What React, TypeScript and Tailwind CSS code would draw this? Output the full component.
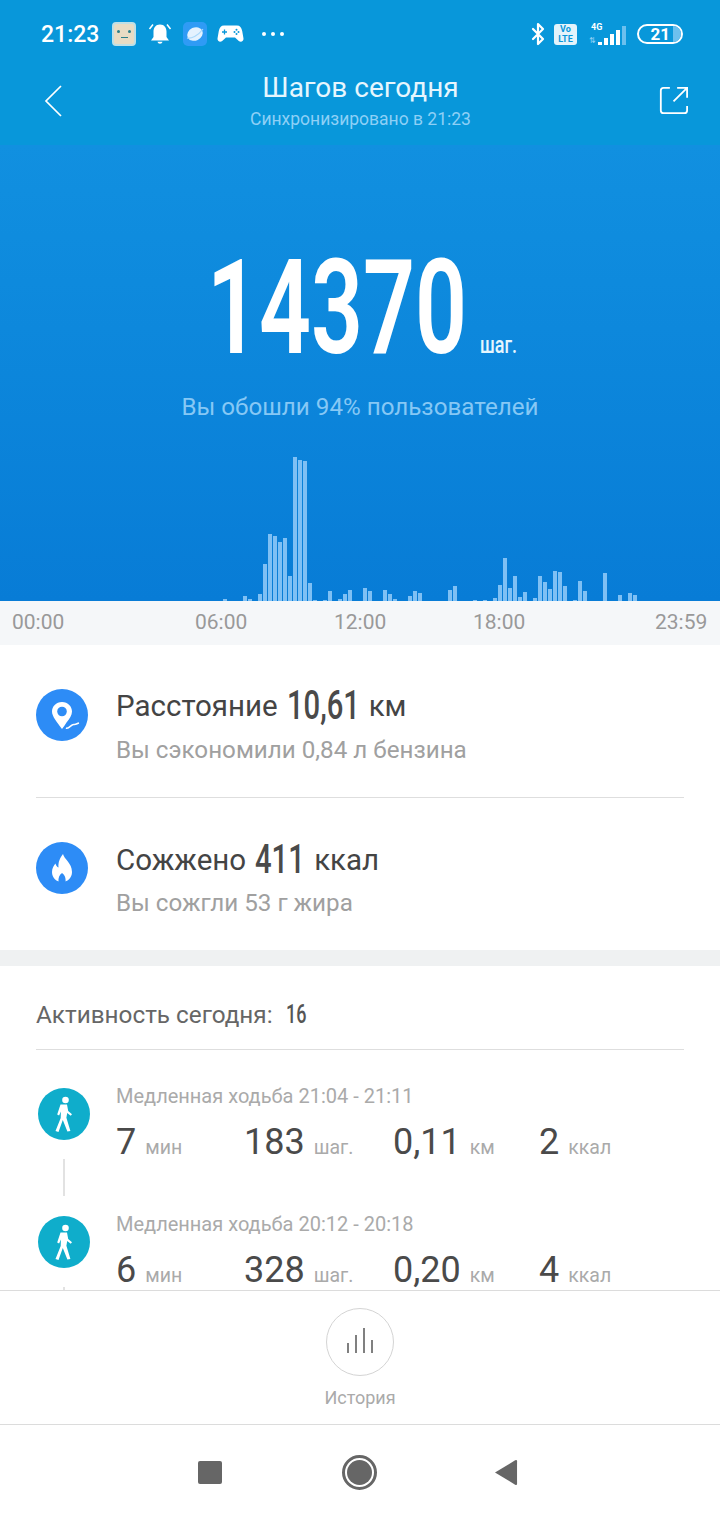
import React from "react";
import { Bluetooth } from "lucide-react";

// [x position in px, bar height in px] of the daily step chart
const bars: [number, number][] = [
    [223, 2], [243, 5], [248, 2], [258, 7], [263, 37], [268, 67], [273, 65], [278, 59],
    [283, 63], [288, 25], [293, 144], [298, 141], [303, 140], [308, 18], [313, 1], [323, 1],
    [328, 10], [338, 2], [343, 7], [348, 11], [363, 13], [368, 10], [383, 11], [388, 7],
    [393, 2], [408, 5], [413, 10], [418, 8], [448, 11], [453, 15], [473, 1], [483, 1],
    [493, 3], [498, 16], [503, 43], [508, 13], [513, 25], [518, 4], [523, 9], [533, 3],
    [538, 25], [543, 19], [548, 12], [553, 30], [558, 29], [563, 15], [573, 1], [578, 20],
    [583, 10], [603, 28], [618, 6], [628, 8], [633, 6],
];

const slots = Array.from({ length: 143 }, (_, i) => {
    const found = bars.find((b) => b[0] === 3 + i * 5);
    return found ? found[1] : 0;
});

const activities = [
    { title: "Медленная ходьба 21:04 - 21:11", min: "7", steps: "183", km: "0,11", kcal: "2" },
    { title: "Медленная ходьба 20:12 - 20:18", min: "6", steps: "328", km: "0,20", kcal: "4" },
];

function Walker() {
    return (
        <svg width="52" height="52" viewBox="0 0 52 52" fill="none">
            <circle cx="26" cy="26" r="26" fill="#0fadcb" />
            <circle cx="27.500" cy="12" r="3.300" fill="#fff" />
            <path
                d="M22.500 16.500h6.500l1.200 6.500 3.800 3.300-1.300 1.500-3.500-2.800-.8 4.700 4 13.300-3 .6-4.600-11.500-4.300 11.800-3-1 5.200-13 .2-6.500-1.800 4-1.900-.9z"
                fill="#fff"
            />
        </svg>
    );
}

function StatusBar() {
    return (
        <div className="h-[66px] flex items-center justify-between pl-[41px] pr-[37px] pt-[2px] text-white">
            <div className="flex items-center">
                <span className="text-[23px] font-medium leading-none w-[59px]">21:23</span>
                <div className="ml-[12px] w-[24px] h-[24px] rounded-[4px] bg-[#e8dcc4] border-2 border-[#bfe0e6] flex flex-col items-center justify-center">
                    <div className="flex gap-[8px]">
                        <div className="w-[3px] h-[3px] rounded-full bg-[#2a7f8a]" />
                        <div className="w-[3px] h-[3px] rounded-full bg-[#2a7f8a]" />
                    </div>
                    <div className="w-[7px] h-[1px] bg-[#2a7f8a] mt-[4px]" />
                </div>
                <svg className="ml-[12px]" width="24" height="24" viewBox="0 0 24 24" fill="#fff">
                    <path d="M12 2.500c-4.500 0-6.500 3.500-6.500 7v5.500L3 18.500h18L18.500 15V9.500c0-3.500-2-7-6.500-7z" />
                    <path d="M9.500 19.800h5c-.3 1.300-1.200 2-2.500 2s-2.200-.7-2.500-2z" />
                    <path d="M5 2.500L1.500 7M19 2.500L22.500 7" stroke="#fff" strokeWidth="1.500" />
                </svg>
                <svg className="ml-[11px]" width="24" height="24" viewBox="0 0 24 24">
                    <rect width="24" height="24" rx="5" fill="#2f9bf5" />
                    <ellipse cx="12" cy="12" rx="8" ry="6.500" transform="rotate(-25 12 12)" fill="#e4f2fe" />
                    <path d="M4 16c4 1 11-2 16-9" stroke="#a9d8fb" strokeWidth="1.200" fill="none" />
                </svg>
                <svg className="ml-[10px]" width="27" height="20" viewBox="0 0 27 20" fill="#fff">
                    <path d="M7 1.500h13c3 0 4.500 2 5.200 5.500l1.300 7.500c.3 2.500-2.500 4.500-4.700 2.500L18 13.500H9L5.200 17C3 19 .2 17 .5 14.500L1.800 7C2.500 3.500 4 1.500 7 1.500z" />
                    <path d="M7.500 5.500v5M5 8h5" stroke="#0897da" strokeWidth="1.300" />
                    <circle cx="19.500" cy="5.800" r="1" fill="#0897da" />
                    <circle cx="19.500" cy="10" r="1" fill="#0897da" />
                    <circle cx="17.500" cy="8" r="1" fill="#0897da" />
                    <circle cx="21.500" cy="8" r="1" fill="#0897da" />
                </svg>
                <div className="ml-[18px] flex gap-[5px]">
                    <div className="w-[4px] h-[4px] rounded-full bg-white" />
                    <div className="w-[4px] h-[4px] rounded-full bg-white" />
                    <div className="w-[4px] h-[4px] rounded-full bg-white" />
                </div>
            </div>
            <div className="flex items-center">
                <Bluetooth size={24} strokeWidth={2.2} />
                <div className="ml-[4px] w-[23px] h-[21px] rounded-[3px] bg-[#e3f3fb] text-[#0897da] text-[9px] font-bold leading-[10px] text-center">
                    Vo
                    <br />
                    LTE
                </div>
                <div className="ml-[12px] w-[37px] h-[22px] flex flex-col justify-between">
                    <span className="text-[9px] font-bold leading-none ml-[2px]">4G</span>
                    <div className="flex items-end gap-[2px] h-[19px] -mt-[9px]">
                        <div className="w-[7px] h-[8px] text-[8px] leading-none text-[#8fd0f5]">⇅</div>
                        <div className="w-[4px] h-[3px] bg-white" />
                        <div className="w-[4px] h-[7px] bg-white" />
                        <div className="w-[4px] h-[11px] bg-white" />
                        <div className="w-[4px] h-[15px] bg-white" />
                        <div className="w-[4px] h-[19px] bg-[#6cc0ee]" />
                    </div>
                </div>
                <div className="ml-[11px] w-[46px] h-[20px] rounded-full border-2 border-white overflow-hidden flex items-center justify-end">
                    <span className="text-[17px] font-bold leading-none mr-[3px]">21</span>
                    <div className="w-[8px] h-full bg-[#6cc0ee]" />
                </div>
            </div>
        </div>
    );
}

function Header() {
    return (
        <div className="h-[79px] flex justify-between items-start pl-[44px] pr-[32px]">
            <svg className="mt-[19px]" width="18" height="32" viewBox="0 0 18 32" fill="none">
                <path d="M17 1L2 16l15 15" stroke="#fff" strokeWidth="1.700" />
            </svg>
            <div className="flex flex-col items-center">
                <span className="text-[28px] leading-[30px] mt-[7px] text-[#e6f6fe]">Шагов сегодня</span>
                <span className="text-[17.500px] leading-[20px] mt-[6px] text-[#8ed0f6]">Синхронизировано в 21:23</span>
            </div>
            <svg className="mt-[20px]" width="29" height="29" viewBox="0 0 32 32" fill="none" stroke="#fff" strokeWidth="2">
                <path d="M12 2H5a3 3 0 0 0-3 3v22a3 3 0 0 0 3 3h23a3 3 0 0 0 3-3v-5" />
                <path d="M20 2h11v11M31 2L16 17" />
            </svg>
        </div>
    );
}

function Hero() {
    return (
        <div className="h-[456px] bg-gradient-to-b from-[#1190e0] to-[#087cd6] flex flex-col">
            <div className="mt-[103px] h-[120px] flex items-baseline ml-[207px]">
                <span className="inline-block w-[262px] origin-left scale-x-[0.695] whitespace-nowrap text-[131px] font-semibold leading-[120px] text-white">
                    14370
                </span>
                <span className="inline-block w-[40px] ml-[11px] origin-left scale-x-[0.75] whitespace-nowrap text-[24px] font-medium leading-none text-[#e6f6fe]">
                    шаг.
                </span>
            </div>
            <p className="mt-[24px] text-center text-[24.200px] leading-[30px] text-[#86c8f5]">Вы обошли 94% пользователей</p>
            <div className="mt-auto flex items-end gap-[1px] pl-[3px] h-[144px]">
                {slots.map((h, i) => (
                    <div key={i} className="w-[4px] shrink-0 bg-[#7fc0f4]" style={{ height: h }} />
                ))}
            </div>
        </div>
    );
}

function Axis() {
    return (
        <div className="h-[44px] shrink-0 bg-[#f5f7f9] flex items-center pl-[12px] text-[21px] text-[#999]">
            <span className="w-[53px]">00:00</span>
            <span className="w-[53px] ml-[130px]">06:00</span>
            <span className="w-[53px] ml-[86px]">12:00</span>
            <span className="w-[53px] ml-[86px]">18:00</span>
            <span className="w-[53px] ml-[129px]">23:59</span>
        </div>
    );
}

function Bold({ width, children }: { width: number; children: React.ReactNode }) {
    return (
        <span
            className="inline-block origin-left scale-x-[0.73] whitespace-nowrap text-[40px] font-medium text-[#4a4a4a]"
            style={{ width }}
        >
            {children}
        </span>
    );
}

function Summary() {
    return (
        <div className="px-[36px] bg-white h-[305px] shrink-0 flex flex-col">
            <div className="h-[153px] flex items-start border-b border-[#dedede]">
                <svg className="mt-[44px] shrink-0" width="52" height="52" viewBox="0 0 52 52" fill="none">
                    <circle cx="26" cy="26" r="26" fill="#2d8cf6" />
                    <path d="M26 13c-6 0-10 4.500-10 9.500 0 5 5 10.500 10 17.500 1.500-2 3-4 4.500-6.500 3-4 5.500-7 5.500-11C36 17.500 32 13 26 13z" fill="#fff" />
                    <circle cx="26" cy="22.500" r="4.800" fill="#2d8cf6" />
                    <path d="M30 39c3 1.500 5-4 8-3.500 2 .3 3-1 5-1.500" stroke="#fff" strokeWidth="1.600" />
                </svg>
                <div className="ml-[28px] mt-[38px]">
                    <div className="h-[46px] flex items-center text-[29.500px] text-[#444] whitespace-nowrap">
                        Расстояние
                        <span className="w-[9px]" />
                        <Bold width={72}>10,61</Bold>
                        <span className="w-[10px]" />
                        км
                    </div>
                    <p className="mt-[8px] text-[24.200px] leading-[26px] text-[#a0a0a0]">Вы сэкономили 0,84 л бензина</p>
                </div>
            </div>
            <div className="flex items-start">
                <svg className="mt-[44px] shrink-0" width="52" height="52" viewBox="0 0 52 52" fill="none">
                    <circle cx="26" cy="26" r="26" fill="#2d8cf6" />
                    <path d="M27 12c1 5 9 9 9 18 0 6-4.500 10-10 10s-10-4-10-10c0-4 2-6.500 3.500-8.500.5 2 1.500 3.500 3 4C22 20 24 16 27 12z" fill="#fff" />
                    <path d="M26 31c-2.500 2-4 4.500-3.500 9h7c.5-4.500-1-7-3.500-9z" fill="#2d8cf6" />
                </svg>
                <div className="ml-[28px] mt-[39px]">
                    <div className="h-[46px] flex items-center text-[29.500px] text-[#444] whitespace-nowrap">
                        Сожжено
                        <span className="w-[9px]" />
                        <Bold width={50}>411</Bold>
                        <span className="w-[9px]" />
                        ккал
                    </div>
                    <p className="mt-[7px] text-[24.200px] leading-[26px] text-[#a0a0a0]">Вы сожгли 53 г жира</p>
                </div>
            </div>
        </div>
    );
}

function Stat({ value, unit, width }: { value: string; unit: string; width: number }) {
    return (
        <div className="flex items-baseline whitespace-nowrap" style={{ width }}>
            <span className="text-[36px] leading-[44px] text-[#4a4a4a]">{value}</span>
            <span className="ml-[9px] text-[19.500px] text-[#aaa]">{unit}</span>
        </div>
    );
}

function Activity() {
    return (
        <div className="flex-1 bg-white overflow-hidden px-[36px]">
            <div className="h-[84px] border-b border-[#dedede] flex items-center pt-[15px] text-[24.300px] text-[#666]">
                Активность сегодня:
                <span className="ml-[13px] inline-block w-[24px] origin-left scale-x-[0.72] text-[25px] font-medium text-[#555]">16</span>
            </div>
            <div className="pt-[38px]">
                {activities.map((a) => (
                    <div key={a.title} className="flex items-start h-[128px]">
                        <div className="ml-[2px] w-[52px] shrink-0 flex flex-col items-center">
                            <Walker />
                            <div className="mt-[19px] w-[2px] h-[37px] bg-[#e2e2e2]" />
                        </div>
                        <div className="ml-[26px]">
                            <p className="text-[20px] leading-[20px] text-[#aaa] whitespace-nowrap -mt-[2px]">{a.title}</p>
                            <div className="flex mt-[14px]">
                                <Stat value={a.min} unit="мин" width={128} />
                                <Stat value={a.steps} unit="шаг." width={149} />
                                <Stat value={a.km} unit="км" width={146} />
                                <Stat value={a.kcal} unit="ккал" width={90} />
                            </div>
                        </div>
                    </div>
                ))}
            </div>
        </div>
    );
}

function HistoryBar() {
    return (
        <div className="h-[135px] shrink-0 bg-white border-t border-b border-[#dcdcdc] flex flex-col items-center">
            <div className="mt-[17px] w-[68px] h-[68px] rounded-full border border-[#d4d4d4] flex items-end justify-center gap-[5.500px] pb-[22px]">
                <div className="w-[2.500px] h-[10px] bg-[#808080]" />
                <div className="w-[2.500px] h-[18px] bg-[#808080]" />
                <div className="w-[2.500px] h-[25px] bg-[#808080]" />
                <div className="w-[2.500px] h-[13px] bg-[#808080]" />
            </div>
            <span className="mt-[10px] text-[18px] leading-[24px] text-[#aaa]">История</span>
        </div>
    );
}

function NavBar() {
    return (
        <div className="h-[95px] shrink-0 bg-white flex items-center">
            <div className="ml-[198px] w-[24px] h-[23px] rounded-[2px] bg-[#666]" />
            <div className="ml-[120px] w-[35px] h-[35px] rounded-full border-[3px] border-[#666] flex items-center justify-center">
                <div className="w-[25px] h-[25px] rounded-full bg-[#666]" />
            </div>
            <svg className="ml-[118px]" width="23" height="27" viewBox="0 0 24 27">
                <path d="M0 13.500L21 .8q2-1 2 1v23.400q0 2-2 1z" fill="#666" />
            </svg>
        </div>
    );
}

export default function App() {
    return (
        <div className="w-[720px] h-[1520px] flex flex-col overflow-hidden bg-white font-['Roboto',sans-serif]">
            <div className="bg-[#0897da] shrink-0">
                <StatusBar />
                <Header />
            </div>
            <Hero />
            <Axis />
            <Summary />
            <div className="h-[16px] shrink-0 bg-[#eff1f2]" />
            <Activity />
            <HistoryBar />
            <NavBar />
        </div>
    );
}
